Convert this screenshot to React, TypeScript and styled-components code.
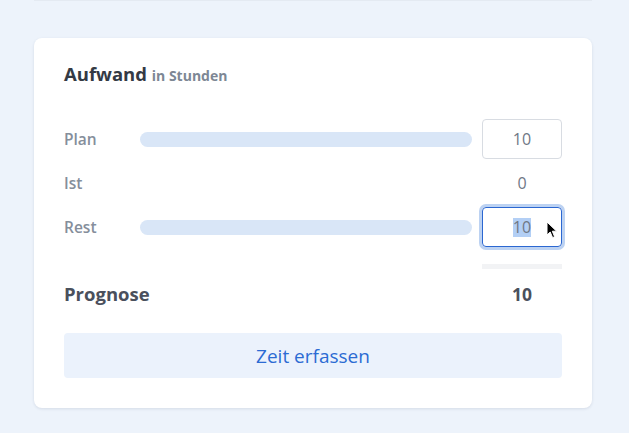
import styled, { createGlobalStyle } from "styled-components";

const GlobalStyle = createGlobalStyle`
  html, body {
    margin: 0;
    padding: 0;
    background: #edf3fb;
    font-family: "Open Sans", "Lato", sans-serif;
  }
`;

const Page = styled.div`
  width: 629px;
  height: 433px;
  padding: 0 37px 0 34px;
  box-sizing: border-box;
  background: #edf3fb;
`;

const PrevCardEdge = styled.div`
  height: 1px;
  background: #e4eaf2;
  margin-bottom: 37px;
`;

const Card = styled.div`
  position: relative;
  background: #fff;
  border-radius: 8px;
  box-shadow: 0 1px 3px rgba(40, 60, 90, 0.12);
  padding: 26px 30px 30px;
  height: 370px;
  box-sizing: border-box;
`;

const Title = styled.div`
  font-size: 18.5px;
  font-weight: 700;
  color: #343a44;
  line-height: 20px;
  height: 20px;
`;

const Unit = styled.span`
  font-size: 14px;
  font-weight: 700;
  color: #7d8794;
`;

const Rows = styled.div`
  margin-top: 35px;
  display: flex;
  flex-direction: column;
  gap: 4px;
`;

const Row = styled.div`
  display: grid;
  grid-template-columns: 66px 1fr 80px;
  column-gap: 10px;
  align-items: center;
  height: 40px;
`;

const Label = styled.div`
  font-size: 15.5px;
  font-weight: 600;
  color: #858e9b;
`;

const Bar = styled.div`
  height: 15px;
  border-radius: 8px;
  background: #d9e6f7;
`;

const ValueBox = styled.div<{ $focused?: boolean }>`
  height: 40px;
  box-sizing: border-box;
  border-radius: 4px;
  border: 1px solid ${({ $focused }) => ($focused ? "#2b67d1" : "#d8dce2")};
  box-shadow: ${({ $focused }) => ($focused ? "0 0 0 3px #bcd2f2" : "none")};
  display: flex;
  align-items: center;
  justify-content: center;
  font-size: 16px;
  color: #6f7886;
  position: relative;
`;

const PlainValue = styled.div`
  grid-column: 3;
  text-align: center;
  font-size: 16px;
  color: #6f7886;
`;

const Selected = styled.span`
  background: #b3cff5;
  line-height: 19px;
`;

const Cursor = styled.svg`
  position: absolute;
  left: 63px;
  top: 13px;
`;

const Ghost = styled.div`
  margin: 17px 0 0 auto;
  width: 80px;
  height: 5px;
  background: #f2f3f5;
`;

const TotalRow = styled.div`
  display: grid;
  grid-template-columns: 1fr 80px;
  align-items: center;
  margin-top: 12px;
  height: 22px;
`;

const TotalLabel = styled.div`
  font-size: 18.5px;
  font-weight: 700;
  color: #4a505c;
`;

const TotalValue = styled.div`
  text-align: center;
  font-size: 17.5px;
  font-weight: 700;
  color: #4a505c;
`;

const ActionButton = styled.button`
  margin-top: 30px;
  width: 100%;
  height: 45px;
  border: none;
  border-radius: 4px;
  background: #ebf2fc;
  color: #2c6bd3;
  font-family: inherit;
  font-size: 19px;
  cursor: pointer;
`;

export default function App() {
  return (
    <>
      <GlobalStyle />
      <Page>
        <PrevCardEdge />
        <Card>
          <Title>
            Aufwand <Unit>in Stunden</Unit>
          </Title>

          <Rows>
            <Row>
              <Label>Plan</Label>
              <Bar />
              <ValueBox>10</ValueBox>
            </Row>
            <Row>
              <Label>Ist</Label>
              <PlainValue>0</PlainValue>
            </Row>
            <Row>
              <Label>Rest</Label>
              <Bar />
              <ValueBox $focused>
                <Selected>10</Selected>
                <Cursor width="12" height="18" viewBox="0 0 12 18">
                  <path
                    d="M1 1 L1 14 L4.2 11 L6.6 16.6 L8.6 15.7 L6.3 10.2 L10.6 10.2 Z"
                    fill="#000"
                    stroke="#fff"
                    strokeWidth="1"
                  />
                </Cursor>
              </ValueBox>
            </Row>
          </Rows>

          <Ghost />

          <TotalRow>
            <TotalLabel>Prognose</TotalLabel>
            <TotalValue>10</TotalValue>
          </TotalRow>

          <ActionButton>Zeit erfassen</ActionButton>
        </Card>
      </Page>
    </>
  );
}
